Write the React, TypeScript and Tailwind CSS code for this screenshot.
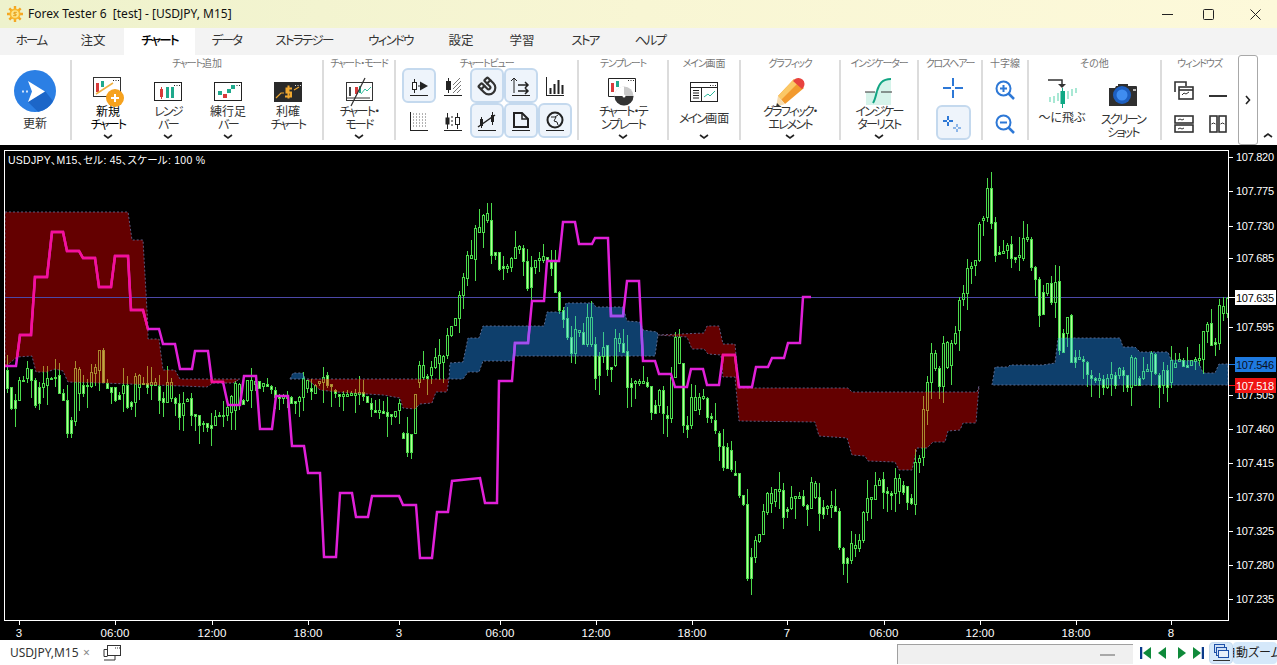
import React from 'react';
import { Magnet } from 'lucide-react';

// candle bodies as top,bottom in screen pixels, one pair every 4px starting at x=7
const BODIES = [
  370,388, 387,408, 400,408, 380,400, 380,381, 368,378, 369,380, 380,405, 387,403, 383,387,
  378,385, 378,379, 377,378, 375,393, 393,400, 400,433, 420,433, 368,421, 369,393, 385,393,
  385,386, 372,386, 367,373, 350,370, 350,382, 383,388, 387,392, 387,400, 395,399, 385,393,
  385,407, 402,406, 376,402, 375,387, 383,384, 383,387, 382,385, 382,385, 386,400, 398,402,
  382,402, 382,398, 398,403, 403,417, 403,415, 399,401, 398,415, 414,416, 415,425, 423,424,
  423,427, 425,428, 416,425, 415,416, 415,416, 407,415, 396,412, 383,410, 384,404, 400,404,
  380,400, 380,390, 381,384, 381,388, 383,386, 384,386, 386,389, 390,397, 396,398, 396,398,
  396,398, 397,403, 401,403, 397,401, 378,397, 380,388, 388,391, 385,393, 381,383, 377,382,
  375,385, 384,386, 390,393, 394,396, 394,396, 394,396, 393,395, 393,395, 392,394, 392,396,
  396,402, 403,409, 410,412, 410,412, 411,413, 412,416, 414,416, 411,416, 403,410, 433,438,
  433,452, 434,452, 394,433, 365,382, 365,377, 376,378, 367,375, 357,367, 355,363, 356,362,
  335,355, 326,335, 318,325, 295,318, 277,295, 255,278, 255,258, 228,259, 227,232, 215,232,
  213,220, 220,255, 252,255, 252,269, 266,268, 266,268, 258,267, 247,258, 246,249, 248,261,
  261,288, 267,287, 260,267, 258,260, 256,260, 257,261, 262,268, 262,292, 292,310, 310,319,
  318,337, 337,353, 329,353, 330,332, 332,344, 317,344, 317,344, 344,378, 356,375, 347,356,
  345,369, 367,369, 338,365, 338,343, 343,352, 351,387, 383,387, 381,383, 381,383, 381,383,
  382,386, 386,412, 405,413, 390,405, 390,413, 415,418, 377,418, 337,377, 337,363, 363,425,
  425,429, 397,425, 397,410, 397,409, 396,398, 398,417, 416,418, 420,430, 433,446, 446,467,
  447,468, 450,469, 473,475, 473,495, 495,504, 504,578, 557,578, 540,557, 534,541, 511,534,
  493,512, 493,503, 489,501, 489,491, 490,517, 509,511, 497,508, 496,498, 496,498, 496,505,
  505,509, 482,508, 483,497, 497,513, 507,514, 506,508, 505,507, 506,511, 511,547, 548,563,
  558,563, 543,560, 545,548, 540,548, 512,540, 498,512, 497,499, 485,499, 480,485, 479,492,
  491,493, 493,495, 478,493, 478,491, 485,492, 486,502, 498,503, 462,504, 458,462, 409,457,
  382,410, 353,382, 353,368, 368,386, 343,386, 342,367, 343,365, 333,343, 300,330, 293,299,
  268,293, 266,268, 260,265, 224,260, 218,220, 188,217, 188,223, 222,255, 252,254, 251,253,
  245,250, 244,258, 257,259, 255,257, 238,258, 237,239, 239,267, 267,279, 279,315, 292,314,
  283,293, 283,302, 282,302, 281,350, 333,352, 317,333, 315,362, 357,362, 357,359, 359,361,
  362,374, 375,378, 378,380, 378,380, 379,387, 378,387, 374,378, 375,385, 368,375, 370,375,
  375,387, 357,387, 358,385, 378,385, 371,378, 369,371, 353,371, 354,373, 375,387, 370,385,
  370,387, 360,382, 363,367, 359,361, 360,366, 365,367, 360,365, 359,361, 358,360, 331,359,
  324,331, 323,345, 342,344, 305,343, 306,313, 298,313,
];

const RED_1 = '5,212 128,212 132,240 143,240 148,328 148,339 159,339 163,370 175,370 180,379 240,379 233,383 213,383 207,387 103,383 68,382 63,371 55,369 47,372 36,372 32,356 17,357 5,367';
const RED_2 = '307,379 449,379 447,392 436,392 432,403 420,404 415,409 403,408 400,398 383,395 367,394 337,392 320,390';
const RED_3 = '658,335 704,333 707,326 719,326 723,344 735,344 739,388 848,388 852,392 977,392 979,386 976,423 963,423 960,430 948,431 945,442 933,442 927,448 917,448 912,470 899,470 895,462 868,461 865,456 852,455 847,438 819,436 815,422 739,421 735,377 723,377 721,355 708,354 704,349 692,349 687,337';
const BLUE_1 = '290,379 293,373 303,373 305,379';
const BLUE_2 = '449,379 450,363 463,362 468,338 479,338 483,326 544,326 547,312 563,312 566,303 593,303 596,307 623,307 627,321 640,322 643,330 657,332 658,335 655,356 515,356 513,361 483,361 479,372 468,372 463,379';
const BLUE_3 = '992,385 995,367 1008,367 1010,365 1043,365 1055,363 1058,338 1120,338 1123,347 1135,347 1140,352 1168,352 1171,360 1198,361 1203,373 1215,373 1219,364 1228,364 1228,385';

const LINE = '5,366 16,366 20,335 31,335 35,277 47,277 52,232 63,232 67,251 79,251 83,258 95,258 99,287 111,287 115,256 128,256 131,310 143,310 148,329 159,329 163,344 175,344 180,369 192,369 195,351 208,351 212,382 223,382 228,405 240,405 244,376 256,376 260,429 272,429 276,396 288,396 292,446 304,446 308,473 320,473 324,557 336,557 340,493 352,493 356,517 368,517 372,496 399,496 403,505 416,505 420,558 432,558 437,512 448,512 452,481 480,478 485,503 497,503 499,381 512,381 515,343 528,343 532,301 544,301 547,261 559,261 563,222 575,222 579,244 592,244 595,238 608,238 611,316 623,316 627,281 639,281 643,361 655,361 659,374 671,374 675,387 687,387 691,369 703,369 707,385 719,385 723,355 735,355 739,387 752,387 756,367 768,367 772,358 784,358 788,343 800,343 803,297 811,297';

const PRICES: [string, number][] = [
  ['107.820', 157], ['107.775', 191], ['107.730', 226], ['107.685', 258], ['107.595', 327],
  ['107.505', 395], ['107.460', 429], ['107.415', 463], ['107.370', 497], ['107.325', 531],
  ['107.280', 565], ['107.235', 599],
];
const TIMES: [string, number][] = [
  ['3', 19], ['06:00', 115], ['12:00', 212], ['18:00', 308], ['3', 399], ['06:00', 500], ['12:00', 596],
  ['18:00', 692], ['7', 787], ['06:00', 884], ['12:00', 980], ['18:00', 1076], ['8', 1171],
];

const AXIS_FONT = "'Liberation Sans',sans-serif";

const hash = (n: number) => {
  const v = Math.sin(n * 12.9898) * 43758.5453;
  return v - Math.floor(v);
};

const Candles = ({ line, fill }: { line: string; fill: string }) => {
  const items = [];
  for (let i = 0; i < BODIES.length / 2; i++) {
    const x = 7 + i * 4;
    const top = BODIES[i * 2];
    const bottom = BODIES[i * 2 + 1];
    const prev = i === 0 ? top : (BODIES[i * 2 - 2] + BODIES[i * 2 - 1]) / 2;
    const down = (top + bottom) / 2 > prev;
    const high = top - Math.round(hash(i + 1) ** 2 * 18);
    const low = bottom + Math.round(hash(i + 99) ** 2 * 22);
    items.push(
      <g key={i}>
        <line x1={x + 0.5} x2={x + 0.5} y1={high} y2={top} stroke={line} />
        <line x1={x + 0.5} x2={x + 0.5} y1={bottom} y2={low} stroke={line} />
        <rect x={x - 0.5} y={top + 0.5} width={2} height={Math.max(bottom - top, 1)} fill={down ? fill : 'none'} stroke={line} />
      </g>
    );
  }
  return <g shapeRendering="crispEdges">{items}</g>;
};

const Chart = () => (
  <svg viewBox="0 145 1277 495" className="block w-[1277px] h-[495px] bg-black">
    <defs>
      <clipPath id="red-cloud">
        <polygon points={RED_1} />
        <polygon points={RED_2} />
        <polygon points={RED_3} />
      </clipPath>
      <clipPath id="blue-cloud">
        <polygon points={BLUE_1} />
        <polygon points={BLUE_2} />
        <polygon points={BLUE_3} />
      </clipPath>
    </defs>

    {[RED_1, RED_2, RED_3].map((p) => (
      <polygon key={p} points={p} fill="#640000" stroke="#5f5a80" strokeWidth="1" strokeDasharray="2 2" />
    ))}
    {[BLUE_1, BLUE_2, BLUE_3].map((p) => (
      <polygon key={p} points={p} fill="#0e3f6c" stroke="#5a6a90" strokeWidth="1" strokeDasharray="2 2" />
    ))}

    <line x1="5" x2="1228" y1="297.5" y2="297.5" stroke="#4c48a8" />

    <Candles line="#4cdc4c" fill="#b4ff96" />
    <g clipPath="url(#red-cloud)">
      <Candles line="#a88a30" fill="#c8a040" />
    </g>
    <g clipPath="url(#blue-cloud)">
      <Candles line="#3cc88c" fill="#80f0c0" />
    </g>

    <polyline points={LINE} fill="none" stroke="#e020d8" strokeWidth="2.500" />
    <g clipPath="url(#red-cloud)">
      <polyline points={LINE} fill="none" stroke="#f5109a" strokeWidth="2.500" />
    </g>
    <g clipPath="url(#blue-cloud)">
      <polyline points={LINE} fill="none" stroke="#a050f0" strokeWidth="2.500" />
    </g>

    {/* frame and axes */}
    <rect x="4.5" y="150.5" width="1224" height="470" fill="none" stroke="#fff" />
    <text x="8" y="164" fill="#fff" fontSize="10.5" textLength="197" lengthAdjust="spacing" fontFamily="'Liberation Sans','Noto Sans CJK JP',sans-serif">
      USDJPY、M15、セル: 45、スケール: 100 %
    </text>

    {PRICES.map(([label, y]) => (
      <g key={label}>
        <line x1="1229" x2="1233" y1={y + 0.5} y2={y + 0.5} stroke="#fff" />
        <text x="1236" y={y + 4} fill="#fff" fontSize="11" textLength="38" fontFamily={AXIS_FONT}>{label}</text>
      </g>
    ))}
    <line x1="1229" x2="1235" y1="297.5" y2="297.5" stroke="#fff" />
    <rect x="1235" y="290" width="41" height="15" fill="#fff" />
    <text x="1236" y="301.500" fill="#000" fontSize="11" textLength="38" fontFamily={AXIS_FONT}>107.635</text>
    <rect x="1229" y="364" width="6" height="1" fill="#1e7ae0" />
    <rect x="1235" y="357" width="41" height="15" fill="#1e7ae0" />
    <text x="1236" y="368.500" fill="#0a1020" fontSize="11" textLength="38" fontFamily={AXIS_FONT}>107.546</text>
    <rect x="1229" y="385" width="6" height="1" fill="#f01414" />
    <rect x="1235" y="378" width="41" height="15" fill="#f01414" />
    <text x="1236" y="389.500" fill="#fff" fontSize="11" textLength="38" fontFamily={AXIS_FONT}>107.518</text>

    {TIMES.map(([label, x]) => (
      <g key={`${label}-${x}`}>
        <line x1={x + 0.5} x2={x + 0.5} y1="621" y2="625" stroke="#fff" />
        <text x={x} y="637" fill="#fff" fontSize="11.500" textAnchor="middle" fontFamily={AXIS_FONT}>{label}</text>
      </g>
    ))}
  </svg>
);

/* ---------- ribbon icons ---------- */

const FrameDots = ({ x }: { x: number }) => (
  <path d={`M${x} 3.500h1M${x + 2.500} 3.500h1M${x + 5} 3.500h1`} stroke="#222" />
);

const Frame = ({ children, width = 28, height = 19 }: { children?: React.ReactNode; width?: number; height?: number }) => (
  <svg width={width} height={height} viewBox={`0 0 ${width} ${height}`} className="block">
    <rect x="0.5" y="0.5" width={width - 1} height={height - 1} fill="#fff" stroke="#222" />
    <FrameDots x={width - 8} />
    {children}
  </svg>
);

const Logo = () => (
  <svg width="16" height="16" viewBox="0 0 16 16" className="ml-[7px] block">
    <g stroke="#f5a623" strokeWidth="2.400">
      <path d="M8 0v16M0 8h16M2.300 2.300l11.400 11.400M13.700 2.300 2.300 13.700" />
    </g>
    <circle cx="8" cy="8" r="5.500" fill="#f8b82e" />
    <circle cx="8" cy="8" r="3.800" fill="#fde58c" />
    <path d="M9.800 6.300H7v1.700h2v1.700H6.200" fill="none" stroke="#e39a12" />
  </svg>
);

const RefreshIcon = () => (
  <svg width="42" height="42" viewBox="0 0 42 42" className="block">
    <circle cx="21" cy="21" r="21" fill="#2b7fe4" />
    <path d="M14 32 31 21 39 31A21 21 0 0 1 24 41.800Z" fill="#1c66c8" />
    <path d="M14 11 31 21.500 14 32 18 21.500Z" fill="#fff" />
    <path d="M8 21.500h2M12 21.500h2" stroke="#cfe2fa" strokeWidth="2" />
  </svg>
);

const NewChartIcon = () => (
  <div className="relative w-[30px] h-[30px]">
    <svg width="28" height="20" viewBox="0 0 28 20" className="block">
      <rect x="0.500" y="0.500" width="27" height="19" fill="#fff" stroke="#333" />
      <FrameDots x={20} />
      <rect x="3" y="6" width="3" height="9" fill="#d83a3a" />
      <rect x="8" y="4" width="3" height="6" fill="#1fa98c" />
      <path d="M3 17 20 6" stroke="#f0b040" strokeWidth="1.500" />
    </svg>
    <svg width="18" height="18" viewBox="0 0 18 18" className="absolute left-[13px] top-[12px]">
      <circle cx="9" cy="9" r="9" fill="#f6a21e" />
      <path d="M9 5v8M5 9h8" stroke="#fff" strokeWidth="2" />
    </svg>
  </div>
);

const RangeIcon = () => (
  <Frame>
    <path d="M7.500 5v12" stroke="#d83a3a" />
    <rect x="6" y="7" width="3" height="8" fill="#d83a3a" />
    <rect x="12" y="5" width="3" height="11" fill="#1fa98c" />
    <rect x="17" y="5" width="3" height="11" fill="#1fa98c" />
  </Frame>
);

const RenkoIcon = () => (
  <Frame>
    <rect x="4" y="9" width="4" height="4" fill="#1fa98c" />
    <rect x="9" y="12" width="4" height="4" fill="#d83a3a" />
    <rect x="13" y="7" width="4" height="4" fill="#1fa98c" />
    <rect x="17" y="3" width="4" height="4" fill="#1fa98c" />
  </Frame>
);

const ProfitIcon = () => (
  <svg width="28" height="20" viewBox="0 0 28 20" className="block">
    <rect width="28" height="20" fill="#2a2a2a" />
    <path d="M21 3.500h1M23.500 3.500h1M26 3.500h1" stroke="#ddd" />
    <path d="M2 16 7 11h3M20 8l5-3" stroke="#f0a830" strokeWidth="1.200" fill="none" />
    <path d="M18 6.500h-5.500v4H17v4h-6M14.500 3.500v13" stroke="#f0a830" strokeWidth="2" fill="none" />
  </svg>
);

const ModeIcon = () => (
  <svg width="30" height="30" viewBox="0 0 30 30" className="block">
    <rect x="2.500" y="5.500" width="26" height="18" fill="#fff" stroke="#333" />
    <rect x="5" y="10" width="2" height="9" fill="#444" />
    <rect x="11" y="10" width="3" height="7" fill="#d83a3a" />
    <rect x="15" y="9" width="2" height="7" fill="#1fa98c" />
    <path d="M17 17l4-5 2 2 4-4" stroke="#38c0a0" fill="none" />
    <path d="M7 29 21 1" stroke="#333" strokeWidth="1.200" />
    <path d="M3 21h23" stroke="#333" />
  </svg>
);

const TemplateIcon = () => (
  <svg width="32" height="30" viewBox="0 0 32 30" className="block">
    <path d="M28.500 15V1.500H1.500v18H12" fill="#fff" stroke="#222" />
    <FrameDots x={21} />
    <rect x="4" y="6" width="3" height="9" fill="#d83a3a" />
    <rect x="9" y="4" width="3" height="6" fill="#1fa98c" />
    <circle cx="17" cy="19" r="9.500" fill="#c9c9c9" />
    <path d="M7.500 19a9.500 9.500 0 0 0 19 0Z" fill="#333" />
    <path d="M17 19V9.500a9.500 9.500 0 0 0-9.500 9.500Z" fill="#fff" />
    <circle cx="17" cy="19" r="1.500" fill="#fff" />
  </svg>
);

const MainWindowIcon = () => (
  <svg width="28" height="20" viewBox="0 0 28 20" className="block">
    <rect x="0.500" y="0.500" width="27" height="19" fill="#fff" stroke="#222" />
    <path d="M0.500 5.500h27M11.500 5.500v14" stroke="#222" />
    <FrameDots x={20} />
    <path d="M3 8.500h6M3 11h6M3 13.500h6M3 16h6" stroke="#222" />
    <path d="M14 15l4-3 2 2 5-5" stroke="#2bb89a" fill="none" />
  </svg>
);

const PencilIcon = () => (
  <svg width="30" height="30" viewBox="0 0 30 30" className="block">
    <path d="M19 2 29 11 10 27 3 19Z" fill="#f29a2e" />
    <path d="M19 2 23 6 6 23 3 19Z" fill="#fbc866" />
    <path d="M19 3a5 5 0 0 1 9 8L27 12 18 4Z" fill="#e8433f" />
    <path d="M3 19l7 8-9 3Z" fill="#f6dcb0" />
    <path d="M1 30l1-4 3 3Z" fill="#333" />
  </svg>
);

const IndicatorListIcon = () => (
  <svg width="30" height="30" viewBox="0 0 30 30" className="block">
    <path d="M2 15h10c3 0 3-13 15-13v26H2Z" fill="#d6f3ea" />
    <path d="M13 14c2-7 5-12 14-12" stroke="#12a583" strokeWidth="2" fill="none" />
    <path d="M13 14c-1 4-2 9-4 12" stroke="#12a583" strokeWidth="2" fill="none" />
    <path d="M1 15h10M17 15h11" stroke="#333" />
  </svg>
);

const Crosshair = ({ small }: { small?: boolean }) => (
  <svg width="24" height="24" viewBox="0 0 24 24" className="block">
    {small ? (
      <g>
        <path d="M7 5v4M7 11v4M2 10h4M8 10h4" stroke="#2d78d6" strokeWidth="2" />
        <path d="M16 13v3M16 18v3M12 17h3M17 17h3" stroke="#2d78d6" />
      </g>
    ) : (
      <path d="M12 2v8M12 14v8M2 12h8M14 12h8" stroke="#2d78d6" strokeWidth="2" />
    )}
  </svg>
);

const ZoomIcon = ({ plus }: { plus?: boolean }) => (
  <svg width="20" height="20" viewBox="0 0 20 20" className="block">
    <circle cx="8.500" cy="8.500" r="7" fill="none" stroke="#2d78d6" strokeWidth="2" />
    <path d="M13.500 13.500 19 19" stroke="#2d78d6" strokeWidth="2.500" />
    <path d={plus ? 'M5 8.500h7M8.500 5v7' : 'M5 8.500h7'} stroke="#2d78d6" strokeWidth="2" />
  </svg>
);

const JumpIcon = () => (
  <svg width="30" height="30" viewBox="0 0 30 30" className="block">
    <path d="M1 2h14v6" stroke="#333" strokeWidth="1.500" fill="none" />
    <path d="M11 6h8l-4 4Z" fill="#333" />
    <g fill="#a8e8d4">
      <rect x="2" y="19" width="2" height="5" />
      <rect x="6" y="18" width="2" height="7" />
      <rect x="10" y="15" width="2" height="8" />
      <rect x="20" y="13" width="2" height="8" />
      <rect x="24" y="11" width="2" height="7" />
      <rect x="28" y="10" width="2" height="5" />
    </g>
    <rect x="13.500" y="13" width="4.500" height="13" fill="#0fa884" />
    <path d="M15.500 10v20" stroke="#0fa884" />
  </svg>
);

const CameraIcon = () => (
  <svg width="30" height="24" viewBox="0 0 30 24" className="block">
    <path d="M1 5h6l1-2h2V1h10v2h8a1 1 0 0 1 1 1v19H1Z" fill="#2f2f2f" />
    <circle cx="14" cy="12" r="9" fill="#1d5fc0" />
    <circle cx="14" cy="12" r="5.500" fill="#3f8df0" />
    <rect x="25" y="6" width="3" height="2" fill="#bbb" />
  </svg>
);

const WindowsIcon = ({ kind }: { kind: 'cascade' | 'min' | 'stack' | 'cols' }) => (
  <svg width="20" height="20" viewBox="0 0 20 20" className="block">
    {kind === 'cascade' && (
      <g fill="none" stroke="#333" strokeWidth="1.600">
        <path d="M1 11V1h11v4" />
        <rect x="5" y="6" width="14" height="12" fill="#fff" />
        <path d="M5 9h14" />
        <path d="M8 14l2-2 2 1 3-2" strokeWidth="1" />
      </g>
    )}
    {kind === 'min' && <path d="M1 15h18" stroke="#333" strokeWidth="2" />}
    {kind === 'stack' && (
      <g fill="none" stroke="#333" strokeWidth="1.600">
        <rect x="1" y="2" width="18" height="7" />
        <rect x="1" y="11" width="18" height="7" />
        <path d="M4 6l2-1 2 1 2-1M4 15l2-1 2 1 2-1" strokeWidth="1" />
      </g>
    )}
    {kind === 'cols' && (
      <g fill="none" stroke="#333" strokeWidth="1.600">
        <rect x="2" y="2" width="7" height="16" />
        <rect x="11" y="2" width="7" height="16" />
        <path d="M3.500 10l2-1 2 1M12.500 10l2-1 2 1" strokeWidth="1" />
      </g>
    )}
  </svg>
);

const ViewIcon = ({ index }: { index: number }) => {
  const base = <path d="M4 21.500h18" stroke="#222" />;
  const shapes: React.ReactNode[] = [
    <g key="0"><path d="M8.500 5v14" stroke="#222" /><rect x="6.500" y="8.500" width="4" height="7" fill="#fff" stroke="#222" /><path d="M12 12h2" stroke="#222" /><path d="M14 7.500 22 12l-8 4.500Z" fill="#222" /></g>,
    <g key="1"><path d="M8.500 4v15" stroke="#222" /><rect x="6.500" y="7.500" width="4" height="8" fill="#222" stroke="#222" /><path d="M13 11l7-7M13 15l8-8M13 19l8-8M17 19l4-4" stroke="#777" /></g>,
    <g key="2" />,
    <g key="3"><path d="M6 4v15M3 7l3-3 3 3" stroke="#222" fill="none" /><path d="M10 11h10M17 8l3 3-3 3M10 17h10M17 14l3 3-3 3" stroke="#222" fill="none" strokeWidth="1.500" /></g>,
    <g key="4"><path d="M4.500 3v18" stroke="#222" /><path d="M8.500 14v6M12.500 10v10M16.500 6v14M20.500 11v9" stroke="#222" strokeWidth="2" /></g>,
    <g key="5"><path d="M4.500 3v18" stroke="#222" /><path d="M7 5h15M7 8h15M7 11h15M7 14h15M7 17h15" stroke="#666" strokeDasharray="1 2" /></g>,
    <g key="6"><path d="M7.500 4v16M17.500 4v16" stroke="#222" /><rect x="5.500" y="8.500" width="4" height="7" fill="#222" /><rect x="15.500" y="8.500" width="4" height="7" fill="#fff" stroke="#222" /><path d="M12 7v10" stroke="#222" strokeDasharray="2 2" /></g>,
    <g key="7"><path d="M4 18 21 6" stroke="#222" strokeWidth="1.500" /><rect x="6" y="10" width="3" height="7" fill="#222" /><path d="M7.500 8v11M18.500 3v13" stroke="#222" /><rect x="17" y="6" width="3" height="7" fill="#222" /></g>,
    <g key="8"><path d="M6 18V4h8l6 6v8Z" fill="none" stroke="#222" strokeWidth="2" /><path d="M14 4v6h6" fill="none" stroke="#222" strokeWidth="1.500" /></g>,
    <g key="9"><circle cx="13" cy="11" r="7.500" fill="none" stroke="#222" strokeWidth="2" /><path d="M9 8h5l-2 4 3 1 1 3M16 6l-3 2" fill="none" stroke="#222" /></g>,
  ];
  if (index === 2) {
    return <Magnet className="w-[20px] h-[20px] text-[#333] rotate-90" strokeWidth={2.6} />;
  }
  return (
    <svg width="26" height="24" viewBox="0 0 26 24" className="block">
      {shapes[index]}
      {base}
    </svg>
  );
};

const Chevron = () => (
  <svg width="10" height="6" viewBox="0 0 10 6" className="block">
    <path d="M1 1l4 3 4-3" fill="none" stroke="#222" strokeWidth="1.600" />
  </svg>
);

/* ---------- text: the original UI font has narrow kana, so kana runs get tightened ---------- */

const Jp = ({ text, kana }: { text: string; kana: string }) => (
  <>
    {text.split(/([ァ-ヶー・]+)/).map((part, i) =>
      i % 2 === 1 ? <span key={i} className={kana}>{part}</span> : part
    )}
  </>
);

/* ---------- ribbon layout ---------- */

const Group = ({ title, width, children, last }: { title: string; width: string; children: React.ReactNode; last?: boolean }) => (
  <div className={`${width} h-[80px] shrink-0 flex flex-col ${last ? '' : 'border-r-2 border-[#dcdcdc]'}`}>
    <div className="h-[12px] -mt-[1px] text-center text-[10px] leading-[8px] text-[#777] whitespace-nowrap">
      <Jp text={title} kana="tracking-[-1.2px]" />
    </div>
    <div className="flex-1 flex">{children}</div>
  </div>
);

const Label = ({ lines, dark }: { lines: string[]; dark?: boolean }) => (
  <div className={`flex flex-col items-center justify-center text-[12px] leading-[13px] whitespace-nowrap ${dark ? 'text-black' : 'text-[#333]'}`}>
    {lines.map((l) => <span key={l}><Jp text={l} kana="tracking-[-1.8px]" /></span>)}
  </div>
);

const BigButton = ({ icon, lines, width, chevron = true, dark }: { icon: React.ReactNode; lines: string[]; width: string; chevron?: boolean; dark?: boolean }) => (
  <div className={`${width} shrink-0 flex flex-col items-center pt-[5px]`}>
    <div className="h-[31px] flex items-center justify-center">{icon}</div>
    <div className="-mt-[2px] h-[26px] flex items-center justify-center">
      <Label lines={lines} dark={dark} />
    </div>
    {chevron && <div className="mt-[3px]"><Chevron /></div>}
  </div>
);

const TabNames: [string, string][] = [
  ['ホーム', 'w-[62px]'], ['注文', 'w-[62px]'], ['チャート', 'w-[71px]'], ['データ', 'w-[63px]'], ['ストラテジー', 'w-[92px]'],
  ['ウィンドウ', 'w-[81px]'], ['設定', 'w-[60px]'], ['学習', 'w-[62px]'], ['ストア', 'w-[64px]'], ['ヘルプ', 'w-[66px]'],
];

const VIEW_ACTIVE = [0, 2, 3, 7, 8, 9];

export default function App() {
  return (
    <div className="w-[1277px] h-[665px] overflow-hidden flex flex-col bg-white text-black font-['Noto_Sans','Noto_Sans_CJK_JP',sans-serif] [font-feature-settings:'palt']">
      {/* title bar */}
      <div className="h-[28px] shrink-0 flex items-center bg-gradient-to-r from-[#eef2cc] via-[#f8f6d4] to-[#fdf9da]">
        <Logo />
        <span className="ml-[5px] text-[12px] whitespace-pre text-[#111]">Forex Tester 6  [test] - [USDJPY, M15]</span>
        <div className="ml-auto flex items-center pr-[16px] gap-[30px]">
          <svg width="11" height="11" viewBox="0 0 11 11" className="block"><path d="M0 5.500h11" stroke="#222" /></svg>
          <svg width="11" height="11" viewBox="0 0 11 11" className="block"><rect x="0.500" y="0.500" width="10" height="10" rx="1" fill="none" stroke="#222" /></svg>
          <svg width="11" height="11" viewBox="0 0 11 11" className="block ml-[6px]"><path d="M0.500 0.500l10 10M10.500 0.500l-10 10" stroke="#222" /></svg>
        </div>
      </div>

      {/* tabs */}
      <div className="h-[27px] shrink-0 flex bg-[#f3f3f3]">
        {TabNames.map(([name, w]) => (
          <div
            key={name}
            className={`${w} flex items-center justify-center text-[12.500px] ${name === 'チャート' ? 'bg-white font-medium text-black' : 'text-[#333]'}`}
          >
            <Jp text={name} kana="tracking-[-1.7px]" />
          </div>
        ))}
      </div>

      {/* ribbon */}
      <div className="h-[90px] shrink-0 flex pt-[5px] bg-white relative">
        <Group title="" width="w-[72px]">
          <div className="w-[70px] flex flex-col items-center -mt-[1px]">
            <RefreshIcon />
            <span className="mt-[3px] text-[12px] text-[#333]">更新</span>
          </div>
        </Group>
        <Group title="チャート追加" width="w-[252px]">
          <div className="flex pl-[6px]">
            <BigButton icon={<NewChartIcon />} lines={['新規', 'チャート']} width="w-[60px]" dark />
            <BigButton icon={<RangeIcon />} lines={['レンジ', 'バー']} width="w-[60px]" />
            <BigButton icon={<RenkoIcon />} lines={['練行足', 'バー']} width="w-[60px]" />
            <BigButton icon={<ProfitIcon />} lines={['利確', 'チャート']} width="w-[60px]" chevron={false} />
          </div>
        </Group>
        <Group title="チャート・モード" width="w-[72px]">
          <BigButton icon={<ModeIcon />} lines={['チャート・', 'モード']} width="w-[70px]" />
        </Group>
        <Group title="チャートビュー" width="w-[183px]">
          <div className="grid grid-cols-[repeat(5,34px)] grid-rows-[35px_35px] pl-[6px] -mt-[3px]">
            {Array.from({ length: 10 }, (_, i) => (
              <div
                key={i}
                className={`flex items-center justify-center rounded-md ${VIEW_ACTIVE.includes(i) ? 'bg-[#eef4fb] border-2 border-[#c4d9ee]' : ''}`}
              >
                <ViewIcon index={i} />
              </div>
            ))}
          </div>
        </Group>
        <Group title="テンプレート" width="w-[90px]">
          <BigButton icon={<TemplateIcon />} lines={['チャート・テ', 'ンプレート']} width="w-[88px]" />
        </Group>
        <Group title="メイン画面" width="w-[72px]">
          <BigButton icon={<MainWindowIcon />} lines={['メイン画面']} width="w-[70px]" />
        </Group>
        <Group title="グラフィック" width="w-[100px]">
          <BigButton icon={<PencilIcon />} lines={['グラフィック・', 'エレメント']} width="w-[98px]" />
        </Group>
        <Group title="インジケーター" width="w-[78px]">
          <BigButton icon={<IndicatorListIcon />} lines={['インジケー', 'ターリスト']} width="w-[76px]" />
        </Group>
        <Group title="クロスヘアー" width="w-[64px]">
          <div className="w-[62px] flex flex-col items-center pt-[3px] pl-[6px]">
            <div className="w-[34px] h-[34px] flex items-center justify-center"><Crosshair /></div>
            <div className="w-[35px] h-[35px] flex items-center justify-center rounded-md bg-[#eef4fb] border-2 border-[#c4d9ee]"><Crosshair small /></div>
          </div>
        </Group>
        <Group title="十字線" width="w-[46px]">
          <div className="w-[44px] flex flex-col items-center pt-[9px] gap-[14px]">
            <ZoomIcon plus />
            <ZoomIcon />
          </div>
        </Group>
        <Group title="その他" width="w-[133px]">
          <div className="flex pl-[3px]">
            <div className="w-[60px] flex flex-col items-center pt-[7px]">
              <JumpIcon />
              <span className="mt-[3px] text-[12px] leading-[14px] text-[#333] whitespace-nowrap">～に飛ぶ</span>
            </div>
            <div className="w-[62px] flex flex-col items-center pt-[12px]">
              <CameraIcon />
              <div className="mt-[6px]">
                <Label lines={['スクリーン', 'ショット']} />
              </div>
            </div>
          </div>
        </Group>
        <Group title="ウィンドウズ" width="w-[75px]" last>
          <div className="grid grid-cols-[34px_34px] grid-rows-[33px_33px] pl-[5px] pt-[3px] justify-items-center items-center">
            <WindowsIcon kind="cascade" />
            <WindowsIcon kind="min" />
            <WindowsIcon kind="stack" />
            <WindowsIcon kind="cols" />
          </div>
        </Group>
        <div className="shrink-0 w-[20px] h-[90px] -mt-[5px] ml-[1px] border border-[#a8a8a8] rounded-[3px] flex items-center justify-center">
          <svg width="6" height="10" viewBox="0 0 6 10" className="block"><path d="M1 1l3.500 4L1 9" fill="none" stroke="#222" strokeWidth="1.600" /></svg>
        </div>
        <svg width="10" height="6" viewBox="0 0 10 6" className="block ml-[5px] mt-[72px]"><path d="M1 5l4-3 4 3" fill="none" stroke="#222" strokeWidth="1.600" /></svg>
      </div>

      <Chart />

      {/* status bar */}
      <div className="h-[25px] shrink-0 flex items-center bg-white">
        <span className="ml-[10px] w-[68px] text-[12px] text-[#333]">USDJPY,M15</span>
        <span className="ml-[5px] text-[12px] leading-none text-[#888]">×</span>
        <svg width="19" height="16" viewBox="0 0 19 16" className="block ml-[13px]">
          <path d="M4.500 11.500H1v-7h4" fill="none" stroke="#333" />
          <rect x="4.500" y="0.500" width="13" height="10" fill="#fff" stroke="#333" />
          <path d="M12 3h1M14 3h1M16 3h1M1 15h11V11" fill="none" stroke="#333" />
        </svg>
        <div className="ml-auto w-[236px] h-[20px] mt-[3px] flex items-center justify-end pr-[18px] bg-[#f0f0f0] border-t border-l border-[#a0a0a0]">
          <div className="w-[15px] h-[2px] bg-[#a8a8a8]" />
        </div>
        <div className="w-[75px] ml-[1px] flex items-center gap-[6px] pl-[6px]">
          <svg width="11" height="12" viewBox="0 0 11 12" className="block"><path d="M1 0v12" stroke="#0a3a8a" strokeWidth="2.500" /><path d="M11 0v12L3 6Z" fill="#0f8a3a" /></svg>
          <svg width="9" height="12" viewBox="0 0 9 12" className="block"><path d="M9 0v12L1 6Z" fill="#0f8a3a" /></svg>
          <svg width="9" height="12" viewBox="0 0 9 12" className="block ml-[6px]"><path d="M0 0v12l8-6Z" fill="#0f8a3a" /></svg>
          <svg width="11" height="12" viewBox="0 0 11 12" className="block"><path d="M0 0v12l8-6Z" fill="#0f8a3a" /><path d="M10 0v12" stroke="#0a3a8a" strokeWidth="2.500" /></svg>
        </div>
        <div className="w-[24px] h-[22px] shrink-0 flex items-center justify-center rounded-sm bg-[#d5e8fa] border border-[#c4d9ee]">
          <svg width="17" height="17" viewBox="0 0 17 17" className="block">
            <rect x="1.500" y="0.500" width="10" height="8" fill="#cfe0f5" stroke="#1c4fa8" />
            <rect x="3.500" y="3.500" width="10" height="8" fill="#cfe0f5" stroke="#1c4fa8" />
            <rect x="5.500" y="6.500" width="10" height="7" fill="#e8f0fb" stroke="#1c4fa8" />
            <path d="M0 16.500h17" stroke="#333" />
          </svg>
        </div>
        <div className="w-[44px] h-[22px] shrink-0 overflow-hidden flex items-center rounded-sm bg-[#d5e8fa] whitespace-nowrap text-[12px] text-[#222]">
          <span className="-ml-[9px]">自動ズーム</span>
        </div>
      </div>
    </div>
  );
}
